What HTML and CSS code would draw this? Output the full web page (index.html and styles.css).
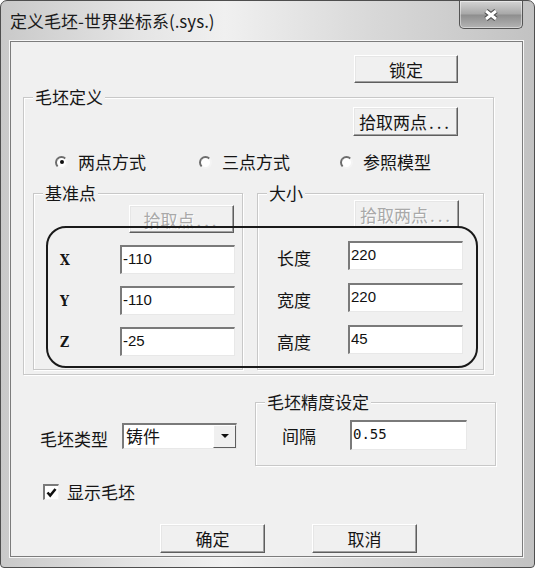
FILE: index.html
```html
<!DOCTYPE html>
<html lang="zh-CN">
<head>
    <meta charset="UTF-8">
    <meta name="viewport" content="width=device-width, initial-scale=1.0">
    <title>定义毛坯-世界坐标系(.sys.)</title>
    <link rel="stylesheet" href="styles.css">
</head>
<body>
    <div class="window">
        <div class="titlebar">
            <div class="title">定义毛坯-世界坐标系(.sys.)</div>
            <div class="close">
                <svg width="18" height="14" viewBox="0 0 18 14">
                    <path d="M4 3 L14 11 M14 3 L4 11" stroke="#4c4c4c" stroke-width="5.4" fill="none"/>
                    <path d="M4 3 L14 11 M14 3 L4 11" stroke="#ffffff" stroke-width="3" fill="none"/>
                </svg>
            </div>
        </div>

        <div class="client">
            <div class="top-row">
                <button class="btn lock-btn">锁定</button>
            </div>

            <div class="group main-group">
                <div class="group-title">毛坯定义</div>
                <div class="pick-row">
                    <button class="btn">拾取两点<span class="dots">...</span></button>
                </div>
                <div class="radios">
                    <label class="radio-item"><span class="radio checked"></span>两点方式</label>
                    <label class="radio-item"><span class="radio"></span>三点方式</label>
                    <label class="radio-item"><span class="radio"></span>参照模型</label>
                </div>
                <div class="subgroups">
                    <div class="group sub-group base-group">
                        <div class="group-title">基准点</div>
                        <div class="sub-pick">
                            <button class="btn disabled">拾取点<span class="dots">...</span></button>
                        </div>
                        <div class="field"><span class="field-label axis">X</span><input class="text-box" type="text" value="-110"></div>
                        <div class="field"><span class="field-label axis">Y</span><input class="text-box" type="text" value="-110"></div>
                        <div class="field"><span class="field-label axis">Z</span><input class="text-box" type="text" value="-25"></div>
                    </div>
                    <div class="group sub-group size-group">
                        <div class="group-title">大小</div>
                        <div class="sub-pick">
                            <button class="btn disabled">拾取两点<span class="dots">...</span></button>
                        </div>
                        <div class="field"><span class="field-label">长度</span><input class="text-box" type="text" value="220"></div>
                        <div class="field"><span class="field-label">宽度</span><input class="text-box" type="text" value="220"></div>
                        <div class="field"><span class="field-label">高度</span><input class="text-box" type="text" value="45"></div>
                    </div>
                </div>
            </div>

            <div class="lower">
                <div class="left-col">
                    <div class="type-row">
                        <span class="type-label">毛坯类型</span>
                        <div class="combo">
                            <span class="combo-text">铸件</span>
                            <span class="combo-arrow"></span>
                        </div>
                    </div>
                    <label class="check-row">
                        <span class="checkbox">
                            <svg width="11" height="11" viewBox="0 0 11 11">
                                <path d="M1.5 5.5 L4.2 8.5 L9.5 2" stroke="#111" stroke-width="2.6" fill="none"/>
                            </svg>
                        </span>
                        显示毛坯
                    </label>
                </div>
                <div class="group precision-group">
                    <div class="group-title">毛坯精度设定</div>
                    <div class="field">
                        <span class="field-label">间隔</span>
                        <input class="text-box mono" type="text" value="0.55">
                    </div>
                </div>
            </div>

            <div class="actions">
                <button class="btn">确定</button>
                <button class="btn">取消</button>
            </div>

            <div class="callout"></div>
        </div>
    </div>
</body>
</html>
```

FILE: styles.css
```css
body {
    margin: 0;
    background: #ffffff;
    font-family: "Noto Sans CJK SC", "Noto Sans", sans-serif;
    font-size: 17px;
    color: #151515;
}

.window {
    width: 535px;
    height: 568px;
    box-sizing: border-box;
    border: 1px solid #4e4e4e;
    border-radius: 7px 7px 4px 4px;
    background: linear-gradient(to right, #c9c9c9 0%, #e4e4e4 25%, #f0f0f0 42%, #d8d8d8 70%, #c2c2c2 100%);
    display: flex;
    flex-direction: column;
    overflow: hidden;
}

.titlebar {
    height: 40px;
    display: flex;
    align-items: flex-start;
}

.title {
    padding: 9px 0 0 9px;
    line-height: 21px;
    font-size: 17px;
    color: #1a1a1a;
}

.close {
    margin-left: auto;
    margin-right: 11px;
    width: 64px;
    height: 28px;
    box-sizing: border-box;
    border: 1px solid #545454;
    border-top: none;
    border-radius: 0 0 5px 5px;
    background: linear-gradient(#d4d4d4, #a8a8a8 48%, #8e8e8e 52%, #b4b4b4);
    box-shadow: inset 0 0 0 1px rgba(255, 255, 255, 0.45);
    display: flex;
    align-items: center;
    justify-content: center;
}

.client {
    margin: 0 11px 10px 9px;
    height: 516px;
    box-sizing: border-box;
    border: 1px solid #7c7c7c;
    background: #f0f0f0;
    box-shadow: 0 0 0 1px #f6f6f6;
    position: relative;
}

/* buttons */
.btn {
    width: 105px;
    height: 29px;
    box-sizing: border-box;
    padding: 0;
    font-family: inherit;
    font-size: 17px;
    color: #151515;
    background: #f0f0f0;
    border: 1px solid;
    border-color: #ffffff #5e5e5e #5e5e5e #ffffff;
    box-shadow: inset -1px -1px 0 #a0a0a0, inset 1px 1px 0 #e6e6e6;
}

.btn.disabled {
    color: #a9a9a9;
    text-shadow: 1px 1px 0 #ffffff;
}

.dots {
    letter-spacing: 3px;
    margin-left: 2px;
}

.top-row {
    display: flex;
    justify-content: flex-end;
    padding: 13px 64px 0 0;
}

.lock-btn {
    width: 104px;
    height: 28px;
}

/* group boxes */
.group {
    position: relative;
    box-sizing: border-box;
    border: 1px solid #c8c8c8;
    box-shadow: inset 1px 1px 0 #ffffff, 1px 1px 0 #ffffff;
}

.group-title {
    position: absolute;
    top: -11px;
    left: 9px;
    padding: 0 2px;
    line-height: 20px;
    background: #f0f0f0;
}

.main-group {
    margin: 14px 0 0 12px;
    width: 471px;
    padding: 9px 9px 4px;
}

.pick-row {
    display: flex;
    justify-content: flex-end;
    margin-right: 26px;
}

.radios {
    display: flex;
    margin-top: 17px;
    padding-left: 22px;
    line-height: 18px;
}

.radio-item {
    display: flex;
    align-items: center;
    gap: 10px;
    width: 152px;
}

.radio-item:nth-child(2) {
    width: 149px;
}

.radio {
    width: 13px;
    height: 13px;
    box-sizing: border-box;
    border-radius: 50%;
    border: 2px solid;
    border-color: #6c6c6c #f4f4f4 #f4f4f4 #6c6c6c;
    background: #ffffff;
    position: relative;
}

.radio.checked::after {
    content: "";
    position: absolute;
    left: 2.5px;
    top: 2.5px;
    width: 4px;
    height: 4px;
    border-radius: 50%;
    background: #111111;
}

.subgroups {
    display: flex;
    gap: 14px;
    margin-top: 22px;
}

.sub-group {
    height: 177px;
}

.base-group {
    width: 210px;
    padding: 11px 8px 0 26px;
}

.size-group {
    width: 227px;
    padding: 6px 24px 0 19px;
}

.sub-pick {
    display: flex;
    justify-content: flex-end;
}

.sub-pick .btn {
    height: 28px;
}

/* fields */
.field {
    display: flex;
    align-items: center;
    height: 29px;
}

.field-label,
.text-box {
    flex-shrink: 0;
}

.base-group .field {
    margin-top: 12px;
}

.base-group .field-label {
    width: 60px;
}

.size-group .field {
    margin-top: 13px;
}

.size-group .field:nth-of-type(1) {
    margin-top: 14px;
}

.size-group .field-label {
    width: 71px;
    padding-top: 3px;
}

.axis {
    font-family: "DejaVu Serif Condensed", "DejaVu Serif", serif;
    font-weight: bold;
    font-size: 14px;
}

.text-box {
    width: 115px;
    height: 29px;
    box-sizing: border-box;
    margin: 0;
    padding: 0 2px 3px 1px;
    font-family: "Liberation Sans", sans-serif;
    font-size: 15px;
    color: #111111;
    background: #ffffff;
    border-style: solid;
    border-width: 2px 1px 1px 2px;
    border-color: #7a7a7a #e8e8e8 #e8e8e8 #7a7a7a;
    outline: none;
}

.text-box.mono {
    font-family: "DejaVu Sans Mono", monospace;
    font-size: 14px;
    width: 117px;
    height: 30px;
}

/* lower part */
.lower {
    display: flex;
    align-items: flex-start;
    margin-top: 27px;
}

.left-col {
    width: 244px;
}

.type-row {
    display: flex;
    align-items: center;
    margin-top: 18px;
    padding-left: 29px;
}

.type-label {
    width: 82px;
    padding-top: 6px;
}

.combo {
    width: 115px;
    height: 26px;
    box-sizing: border-box;
    display: flex;
    align-items: center;
    background: #ffffff;
    border-style: solid;
    border-width: 2px 1px 1px 2px;
    border-color: #7a7a7a #e8e8e8 #e8e8e8 #7a7a7a;
}

.combo-text {
    flex: 1;
    padding-left: 2px;
    line-height: 20px;
}

.combo-arrow {
    width: 23px;
    height: 23px;
    box-sizing: border-box;
    background: #f0f0f0;
    border: 1px solid;
    border-color: #ffffff #5e5e5e #5e5e5e #ffffff;
    display: flex;
    align-items: center;
    justify-content: center;
}

.combo-arrow::after {
    content: "";
    border-left: 4px solid transparent;
    border-right: 4px solid transparent;
    border-top: 4px solid #111111;
}

.check-row {
    display: flex;
    align-items: center;
    gap: 8px;
    margin-top: 32px;
    padding-left: 32px;
    line-height: 18px;
}

.checkbox {
    width: 16px;
    height: 16px;
    box-sizing: border-box;
    border-style: solid;
    border-width: 2px 1px 1px 2px;
    border-color: #7a7a7a #f4f4f4 #f4f4f4 #7a7a7a;
    background: #ffffff;
    display: flex;
    align-items: center;
    justify-content: center;
}

.precision-group {
    width: 241px;
    padding: 17px 0 15px 26px;
}

.precision-group .field-label {
    width: 68px;
}

.precision-group .field {
    height: 30px;
}

.actions {
    display: flex;
    gap: 47px;
    margin-top: 23px;
    padding-left: 149px;
}

/* hand-drawn highlight over the coordinate fields */
.callout {
    position: absolute;
    left: 35px;
    top: 184px;
    width: 432px;
    height: 142px;
    box-sizing: border-box;
    border: 2px solid #1a1a1a;
    border-radius: 20px;
    pointer-events: none;
}
```
